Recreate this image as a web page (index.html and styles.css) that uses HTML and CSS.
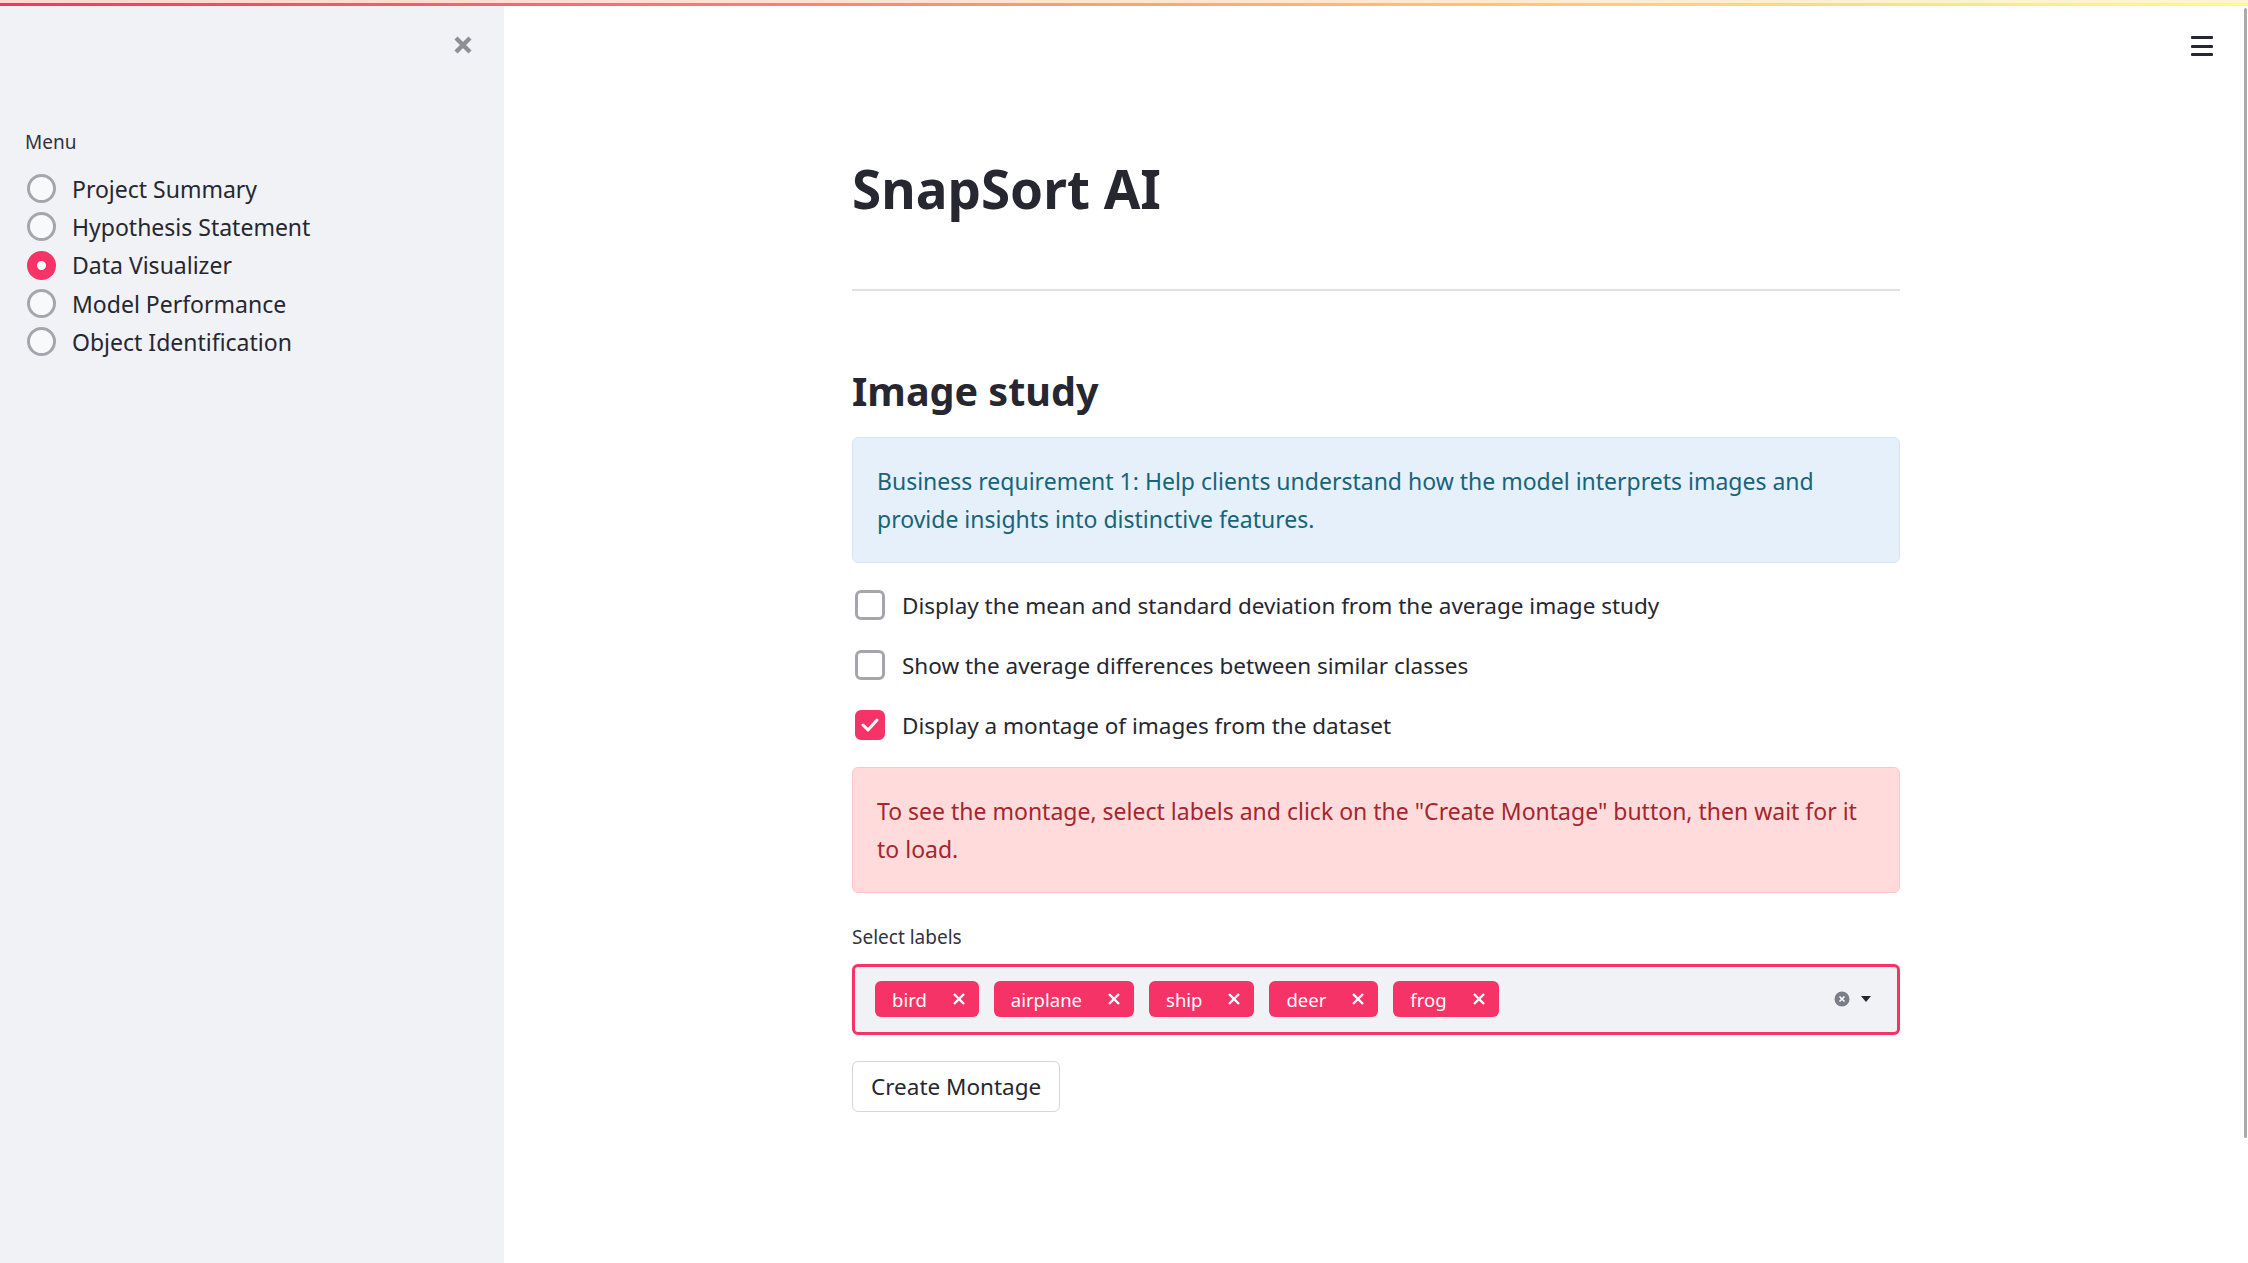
FILE: index.html
```html
<!DOCTYPE html>
<html lang="en">
<head>
<meta charset="utf-8">
<title>SnapSort AI</title>
<link rel="stylesheet" href="styles.css">
</head>
<body>
<div class="decoration"><div class="deco-light"></div><div class="deco-main"></div></div>
<div class="app">
  <aside class="sidebar">
    <div class="sidebar-top">
      <button class="close-btn" aria-label="Close sidebar">
        <svg width="20" height="20" viewBox="0 0 20 20"><path d="M3 3 L17 17 M17 3 L3 17" stroke="#8e8f94" stroke-width="4.4" stroke-linecap="butt"/></svg>
      </button>
    </div>
    <div class="menu-label">Menu</div>
    <ul class="radio-list">
      <li class="radio-item"><span class="radio"></span><span>Project Summary</span></li>
      <li class="radio-item"><span class="radio"></span><span>Hypothesis Statement</span></li>
      <li class="radio-item"><span class="radio checked"></span><span>Data Visualizer</span></li>
      <li class="radio-item"><span class="radio"></span><span>Model Performance</span></li>
      <li class="radio-item"><span class="radio"></span><span>Object Identification</span></li>
    </ul>
  </aside>
  <main class="main">
    <button class="hamburger" aria-label="Menu">
      <span></span><span></span><span></span>
    </button>
    <div class="content">
      <h1 class="title">SnapSort AI</h1>
      <hr class="divider">
      <h2 class="subtitle">Image study</h2>
      <div class="alert alert-info">Business requirement 1: Help clients understand how the model interprets images and provide insights into distinctive features.</div>
      <div class="check-row"><span class="checkbox"></span><span>Display the mean and standard deviation from the average image study</span></div>
      <div class="check-row"><span class="checkbox"></span><span>Show the average differences between similar classes</span></div>
      <div class="check-row"><span class="checkbox checked"><svg width="18" height="14" viewBox="0 0 18 14"><path d="M2 7 L7 12 L16 2" fill="none" stroke="#fff" stroke-width="3" stroke-linecap="round" stroke-linejoin="round"/></svg></span><span>Display a montage of images from the dataset</span></div>
      <div class="alert alert-error">To see the montage, select labels and click on the "Create Montage" button, then wait for it to load.</div>
      <div class="field-label">Select labels</div>
      <div class="multiselect">
        <div class="tags">
          <span class="tag">bird<svg class="tag-x" width="14" height="14" viewBox="0 0 14 14"><path d="M2 2 L12 12 M12 2 L2 12" stroke="#fff" stroke-width="2.4"/></svg></span>
          <span class="tag">airplane<svg class="tag-x" width="14" height="14" viewBox="0 0 14 14"><path d="M2 2 L12 12 M12 2 L2 12" stroke="#fff" stroke-width="2.4"/></svg></span>
          <span class="tag">ship<svg class="tag-x" width="14" height="14" viewBox="0 0 14 14"><path d="M2 2 L12 12 M12 2 L2 12" stroke="#fff" stroke-width="2.4"/></svg></span>
          <span class="tag">deer<svg class="tag-x" width="14" height="14" viewBox="0 0 14 14"><path d="M2 2 L12 12 M12 2 L2 12" stroke="#fff" stroke-width="2.4"/></svg></span>
          <span class="tag">frog<svg class="tag-x" width="14" height="14" viewBox="0 0 14 14"><path d="M2 2 L12 12 M12 2 L2 12" stroke="#fff" stroke-width="2.4"/></svg></span>
        </div>
        <div class="ms-controls">
          <svg width="16" height="16" viewBox="0 0 16 16"><circle cx="8" cy="8" r="7.5" fill="#7b7d88"/><path d="M5.5 5.5 L10.5 10.5 M10.5 5.5 L5.5 10.5" stroke="#fff" stroke-width="1.6"/></svg>
          <svg width="12" height="8" viewBox="0 0 12 8"><path d="M1 1 L11 1 L6 7 Z" fill="#262730"/></svg>
        </div>
      </div>
      <button class="btn">Create Montage</button>
    </div>
  </main>
</div>
<div class="scroll-thumb"></div>
</body>
</html>
```
FILE: styles.css
```css
* { box-sizing: border-box; }
html, body {
  margin: 0;
  padding: 0;
  height: 100%;
  overflow: hidden;
}
body {
  font-family: "Noto Sans", "Open Sans", sans-serif;
  color: #262730;
  background: #ffffff;
}
.decoration {
  position: absolute;
  top: 0;
  left: 0;
  right: 0;
  height: 6px;
  z-index: 10;
}
.deco-light {
  height: 3px;
  background: linear-gradient(90deg, #fbd8cf, #fde8d2 60%, #fff6cf);
}
.deco-main {
  height: 3px;
  background: linear-gradient(90deg, #f63366, #fcb87a 60%, #fffd80);
}
.app {
  display: flex;
  height: 100%;
}
.sidebar {
  width: 504px;
  flex: none;
  background: #f0f2f6;
  padding: 0 0 0 25px;
}
.sidebar-top {
  display: flex;
  justify-content: flex-end;
  padding: 34px 30px 0 0;
  height: 120px;
}
.close-btn {
  border: none;
  background: none;
  padding: 0;
  width: 22px;
  height: 22px;
  display: flex;
  align-items: center;
  justify-content: center;
}
.menu-label {
  font-size: 19px;
  line-height: 26px;
  color: #31333f;
  margin-top: 9px;
}
.radio-list {
  list-style: none;
  margin: 14.5px 0 0 0;
  padding: 0;
}
.radio-item {
  display: flex;
  align-items: center;
  height: 38.3px;
  font-size: 23px;
  color: #262730;
}
.radio {
  width: 29px;
  height: 29px;
  border-radius: 50%;
  border: 3px solid #a5a5ab;
  background: #f8f9fb;
  margin: 0 16px 0 2px;
  flex: none;
}
.radio.checked {
  border: 10.5px solid #f63366;
  background: #ffffff;
}
.main {
  flex: 1;
  position: relative;
  display: flex;
  justify-content: center;
}
.hamburger {
  position: absolute;
  top: 36px;
  right: 35px;
  width: 22px;
  height: 20px;
  border: none;
  background: none;
  padding: 0;
  display: flex;
  flex-direction: column;
  justify-content: space-between;
}
.hamburger span {
  display: block;
  height: 3px;
  background: #262730;
  border-radius: 1px;
}
.content {
  width: 1048px;
  padding-top: 158px;
}
.title {
  font-size: 53px;
  line-height: 62px;
  font-weight: 700;
  margin: 0;
  color: #262730;
  letter-spacing: 0;
}
.divider {
  border: none;
  height: 2px;
  background: #e1e1e4;
  margin: 69px 0 0 0;
}
.subtitle {
  font-size: 39.5px;
  line-height: 50px;
  font-weight: 700;
  margin: 75px 0 0 0;
  color: #262730;
}
.alert {
  font-size: 23px;
  line-height: 38px;
  border-radius: 6px;
  padding: 24px 24px;
  border: 1px solid;
}
.alert-info {
  margin-top: 21px;
  background: #e6f0fb;
  border-color: #d3e5f7;
  color: #17647a;
}
.alert-error {
  margin-top: 12px;
  background: #ffdbdc;
  border-color: #fbc6c8;
  color: #a5262e;
}
.check-row {
  display: flex;
  align-items: center;
  height: 60px;
  font-size: 22.5px;
  color: #262730;
}
.alert-info + .check-row { margin-top: 12px; }
.checkbox {
  width: 30px;
  height: 30px;
  border: 3px solid #a5a5ab;
  border-radius: 6px;
  margin: 0 17px 0 3px;
  flex: none;
  display: flex;
  align-items: center;
  justify-content: center;
}
.checkbox.checked {
  background: #f63366;
  border-color: #f63366;
}
.field-label {
  font-size: 19px;
  line-height: 29px;
  color: #31333f;
  margin-top: 30px;
}
.multiselect {
  margin-top: 11.5px;
  height: 71px;
  border: 3px solid #f63366;
  border-radius: 6px;
  background: #f0f2f6;
  display: flex;
  align-items: center;
  justify-content: space-between;
  padding: 0 25px 0 20px;
}
.tags {
  display: flex;
  gap: 15px;
}
.tag {
  display: flex;
  align-items: center;
  height: 36px;
  background: #f63366;
  color: #ffffff;
  border-radius: 6px;
  font-size: 18.5px;
  padding: 0 13px 0 17px;
}
.tag-x {
  margin-left: 25px;
}
.ms-controls {
  display: flex;
  align-items: center;
  gap: 10px;
}
.btn {
  margin-top: 26px;
  height: 51px;
  padding: 0 18px;
  font-family: inherit;
  font-size: 22.5px;
  color: #262730;
  background: #ffffff;
  border: 1px solid #d6d6da;
  border-radius: 6px;
}
.scroll-thumb {
  position: absolute;
  right: 1px;
  top: 8px;
  width: 3px;
  height: 1130px;
  background: #a9a9ae;
  border-radius: 2px;
}
```
